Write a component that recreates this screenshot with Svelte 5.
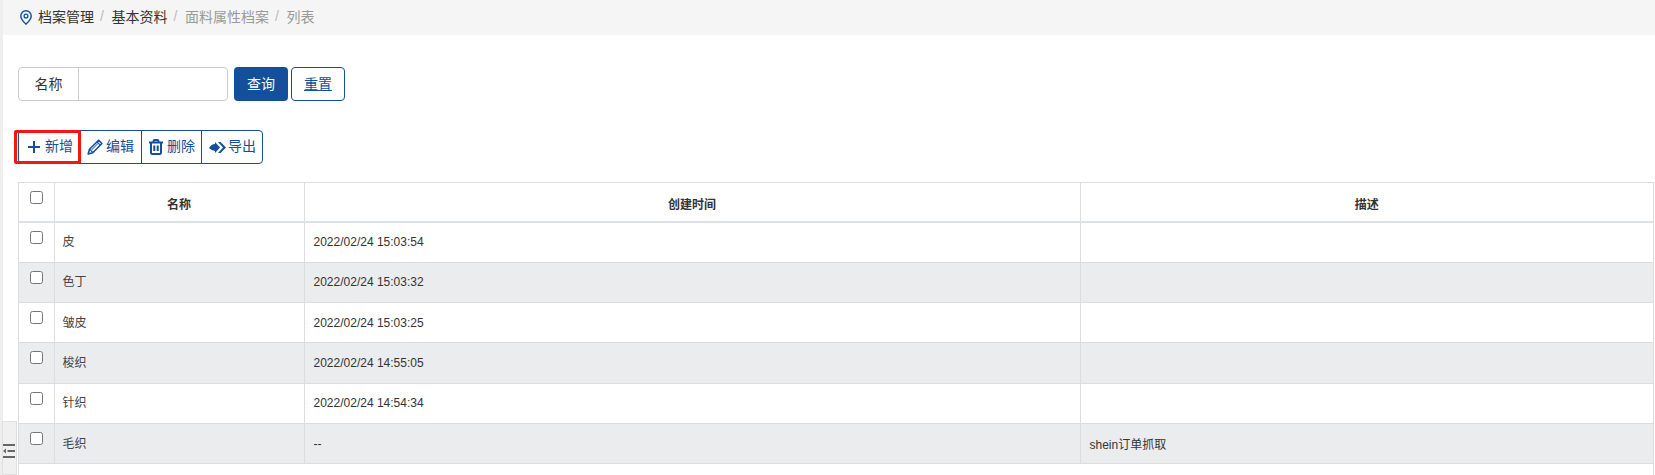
<script>
  const rows = [
    { name: '皮', time: '2022/02/24 15:03:54', desc: '' },
    { name: '色丁', time: '2022/02/24 15:03:32', desc: '' },
    { name: '皱皮', time: '2022/02/24 15:03:25', desc: '' },
    { name: '梭织', time: '2022/02/24 14:55:05', desc: '' },
    { name: '针织', time: '2022/02/24 14:54:34', desc: '' },
    { name: '毛织', time: '--', desc: 'shein订单抓取' }
  ];
</script>

<div class="page">
  <div class="strip"></div>
  <main>
    <nav class="crumbs">
      <svg class="pin" viewBox="0 0 12 15" width="12" height="15" aria-hidden="true">
        <path d="M6 .8A5.2 5.2 0 0 0 .8 6c0 3.400 3.600 6.700 5.200 8.200 1.600-1.500 5.200-4.800 5.200-8.200A5.200 5.200 0 0 0 6 .8z" fill="none" stroke="#134f9b" stroke-width="1.400"/>
        <circle cx="6" cy="6" r="1.900" fill="none" stroke="#134f9b" stroke-width="1.300"/>
      </svg>
      <span class="c">档案管理</span><span class="sep">/</span>
      <span class="c">基本资料</span><span class="sep">/</span>
      <span class="c off">面料属性档案</span><span class="sep">/</span>
      <span class="c off">列表</span>
    </nav>

    <form class="search">
      <div class="field">
        <span class="label">名称</span>
        <input type="text" />
      </div>
      <button type="button" class="primary">查询</button>
      <button type="button" class="reset">重置</button>
    </form>

    <div class="tools">
      <div class="group">
        <button type="button" class="tool add">
          <svg viewBox="0 0 12 12" width="12" height="12"><path d="M6 0v12M0 6h12" stroke="#134f9b" stroke-width="2" fill="none"/></svg>
          <span>新增</span>
        </button>
        <button type="button" class="tool edit">
          <svg viewBox="0 0 16 16" width="16" height="16"><path d="M1.200 15l1.300-4.700L11.600 1.200l3.300 3.300L5.800 13.700z" fill="none" stroke="#134f9b" stroke-width="1.600" stroke-linejoin="round"/><path d="M10 2.800l3.300 3.300M2.800 10.300l3 3" fill="none" stroke="#134f9b" stroke-width="1.200"/><path d="M4.600 10.800l6.400-6.400" stroke="#5d86bb" stroke-width="1.200"/></svg>
          <span>编辑</span>
        </button>
        <button type="button" class="tool del">
          <svg viewBox="0 0 14 16" width="14" height="16"><path d="M0 3.500h14M4.500 3.500V2.200C4.500 1.500 5 1 5.700 1h2.600c.7 0 1.200.5 1.200 1.200v1.300M2 3.500v10.300c0 .7.500 1.200 1.200 1.200h7.600c.7 0 1.200-.5 1.200-1.200V3.500M5.300 6.500v5.500M8.700 6.500v5.500" fill="none" stroke="#134f9b" stroke-width="2"/></svg>
          <span>删除</span>
        </button>
        <button type="button" class="tool exp">
          <svg viewBox="0 0 17 11" width="17" height="11"><path d="M0 6Q2.500 2 6 2V0L11 5.500 6 11V9Q3 9 0 6z" fill="#134f9b"/><path d="M9 0H11.500L17 5.500 11.500 11H9L14 5.500z" fill="#134f9b"/></svg>
          <span>导出</span>
        </button>
      </div>
      <span class="highlight"></span>
    </div>

    <div class="table-wrap">
      <table>
        <colgroup>
          <col class="c0" /><col class="c1" /><col class="c2" /><col />
        </colgroup>
        <thead>
          <tr>
            <th class="chk"><input type="checkbox" /></th>
            <th>名称</th>
            <th>创建时间</th>
            <th>描述</th>
          </tr>
        </thead>
        <tbody>
          {#each rows as r}
            <tr>
              <td class="chk"><input type="checkbox" /></td>
              <td class="name">{r.name}</td>
              <td>{r.time}</td>
              <td>{r.desc}</td>
            </tr>
          {/each}
        </tbody>
      </table>
    </div>
  </main>
  <div class="handle">
    <svg viewBox="0 0 12 14" width="12" height="14"><path d="M0 1h12M0 13h12M4.500 7H12" stroke="#666" stroke-width="2"/><path d="M0 7l3-2.500v5z" fill="#666"/></svg>
  </div>
</div>

<style>
  :global(body) {
    margin: 0;
    background: #fff;
  }
  .page {
    position: relative;
    display: flex;
    width: 1655px;
    height: 475px;
    overflow: hidden;
    font-family: "Liberation Sans", "Noto Sans CJK SC", sans-serif;
    color: #333;
  }
  .strip {
    flex: 0 0 3px;
    background: #eee;
  }
  main {
    flex: 1;
    min-width: 0;
  }
  .crumbs {
    display: flex;
    align-items: center;
    height: 35px;
    padding: 0 0 3px 17px;
    background: #f5f5f5;
    border-bottom-left-radius: 3px;
    font-size: 14px;
    box-sizing: border-box;
  }
  .pin {
    margin: 2px 6px 0 0;
  }
  .c {
    color: #333;
  }
  .off {
    color: #999;
  }
  .sep {
    color: #bbb;
    margin: 0 7.600px 0 6px;
  }
  .search {
    display: flex;
    align-items: center;
    height: 34px;
    margin: 32px 0 0 15px;
  }
  .field {
    display: flex;
    width: 210px;
    height: 34px;
    box-sizing: border-box;
    border: 1px solid #ccc;
    border-radius: 4px;
  }
  .label {
    flex: 0 0 60px;
    display: flex;
    align-items: center;
    justify-content: center;
    padding-bottom: 2px;
    box-sizing: border-box;
    border-right: 1px solid #ccc;
    font-size: 14px;
  }
  .field input {
    flex: 1;
    min-width: 0;
    border: 0;
    outline: 0;
    background: transparent;
  }
  button {
    font-family: inherit;
    cursor: pointer;
  }
  .primary {
    width: 54px;
    height: 34px;
    margin-left: 6px;
    padding: 0 0 3px;
    border: 0;
    border-radius: 4px;
    background: #134f9b;
    color: #fff;
    font-size: 14px;
  }
  .reset {
    width: 54px;
    height: 34px;
    margin-left: 3px;
    padding: 0 0 3px;
    border: 1px solid #134f9b;
    border-radius: 4px;
    background: #fff;
    color: #134f9b;
    font-size: 14px;
    text-decoration: underline;
  }
  .tools {
    position: relative;
    margin: 29px 0 0 15px;
    height: 34px;
  }
  .group {
    display: inline-flex;
    width: 245px;
    height: 34px;
    box-sizing: border-box;
    border: 1px solid #134f9b;
    border-radius: 4px;
  }
  .tool {
    display: flex;
    align-items: center;
    height: 100%;
    width: 61px;
    padding: 0;
    border: 0;
    border-left: 1px solid #134f9b;
    background: transparent;
    color: #134f9b;
    font-size: 14px;
    white-space: nowrap;
    box-sizing: border-box;
  }
  .tool span {
    position: relative;
    top: -2px;
  }
  .add {
    width: 61px;
    border-left: 0;
    padding-left: 9px;
    gap: 5px;
  }
  .edit {
    padding-left: 6px;
    gap: 3px;
  }
  .del {
    width: 60px;
    padding-left: 7px;
    gap: 4px;
  }
  .exp {
    width: 61px;
    padding-left: 7px;
    gap: 2px;
  }
  .highlight {
    position: absolute;
    left: -4px;
    top: 0;
    width: 67px;
    height: 34px;
    border: 3px solid #f5160f;
    border-radius: 2px;
    box-sizing: border-box;
  }
  .table-wrap {
    margin: 18px 0 0 15px;
    width: 1636px;
    height: 293px;
    box-sizing: border-box;
    border: 1px solid #ddd;
    border-bottom: 0;
  }
  table {
    width: 1634px;
    border-collapse: collapse;
    table-layout: fixed;
    font-size: 12px;
  }
  .c0 { width: 35px; }
  .c1 { width: 250px; }
  .c2 { width: 776px; }
  th, td {
    border: 1px solid #ddd;
    padding: 0 9px;
    text-align: left;
    height: 40.330px;
    box-sizing: border-box;
  }
  th {
    text-align: center;
    height: 39px;
    padding-top: 2px;
    border-top: 0;
    border-bottom: 2px solid #dee2e6;
  }
  .name {
    padding: 0 8px 3px;
    color: #444;
  }
  th:first-child, td:first-child {
    border-left: 0;
  }
  th:last-child, td:last-child {
    border-right: 0;
  }
  tbody tr:nth-child(even) {
    background: #ebecee;
  }
  .chk {
    padding: 0;
    vertical-align: top;
    text-align: center;
  }
  .chk input {
    width: 13px;
    height: 13px;
    margin: 8px 0 0;
  }
  .handle {
    position: absolute;
    left: 2px;
    top: 421px;
    width: 15px;
    height: 54px;
    box-sizing: border-box;
    background: #f0f0f0;
    border: 1px solid #e0e0e0;
    padding: 22px 0 0 0;
  }
  .handle svg {
    display: block;
  }
</style>
